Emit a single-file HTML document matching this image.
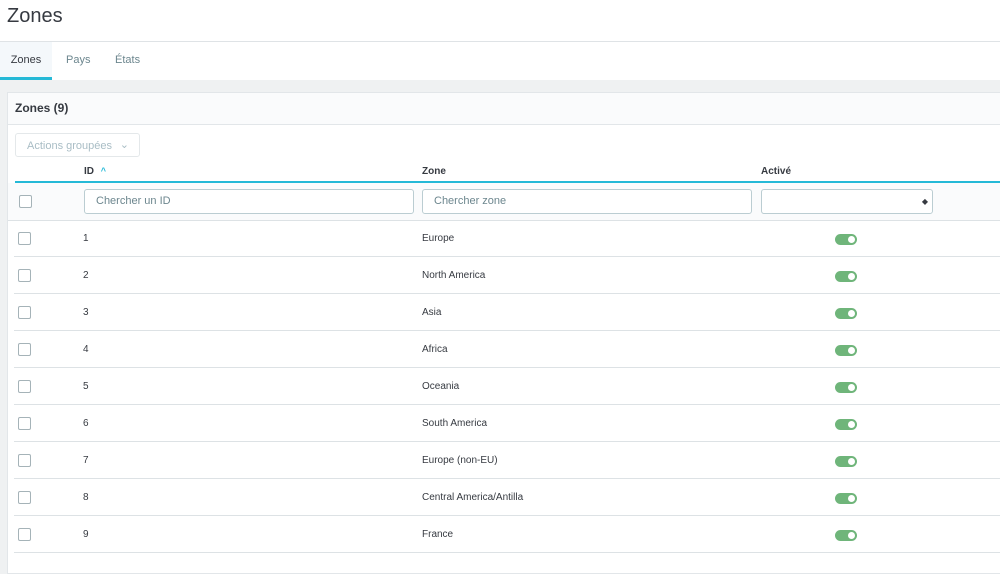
<!DOCTYPE html><html><head><style>
body{margin:0;width:1000px;height:569px;overflow:hidden;font-family:"Liberation Sans",sans-serif;background:#eff1f2;position:relative}
.hdr{position:absolute;left:0;top:0;width:1000px;height:41px;background:#fff;border-bottom:1px solid #dfe3e6}
.hdr h1{margin:0;position:absolute;left:7px;top:5px;font-weight:normal;font-size:20px;color:#363a41}
.tabs{position:absolute;left:0;top:42px;width:1000px;height:38px;background:#fff}
.tab{position:absolute;top:0;height:38px;line-height:36px;font-size:11px;color:#6c868e}
.tab.a{background:#f4f8fb;color:#363a41;border-bottom:3px solid #25b9d7;height:35px}
.panel{position:absolute;left:7px;top:92px;width:1000px;height:480px;background:#fff;border:1px solid #e2e6e9}
.ph{height:31px;background:#fafbfc;border-bottom:1px solid #e2e6e9;font-size:12px;font-weight:bold;color:#363a41;line-height:30px;padding-left:7px}
.btn{position:absolute;left:7px;top:40px;width:125px;height:24px;border:1px solid #e4e8ea;border-radius:3px;font-size:11px;color:#a9bdc5;line-height:24px;padding-left:11px;box-sizing:border-box}
.th{position:absolute;top:73px;font-size:10px;font-weight:bold;color:#363a41}
.blue{position:absolute;left:7px;top:88px;width:1000px;height:2px;background:#25b9d7}
.filt{position:absolute;left:7px;top:90px;width:1000px;height:37px;background:#fafbfc;border-bottom:1px solid #dde2e5}
.in{position:absolute;top:6px;height:25px;border:1px solid #bbcdd2;border-radius:3px;background:#fff;box-sizing:border-box;font-size:11px;color:#6c868e;line-height:23px;padding-left:11px}
.cb{position:absolute;left:4px;width:13px;height:13px;border:1px solid #a5b3b8;border-radius:2px;box-sizing:border-box;background:#fff}
.row{position:absolute;left:7px;width:1000px;height:36px;border-bottom:1px solid #dde2e5;font-size:10px;color:#363a41}
.row span{position:absolute;top:13px}
.tg{position:absolute;left:821px;top:14px;width:22px;height:11px;border-radius:6px;background:#6fb57a}
.tg:after{content:"";position:absolute;right:2px;top:2px;width:7px;height:7px;border-radius:50%;background:#fff}
</style></head><body>
<div class="hdr"><h1>Zones</h1></div>
<div class="tabs"><div class="tab a" style="left:0;width:52px;text-align:center">Zones</div><div class="tab" style="left:66px">Pays</div><div class="tab" style="left:115px">États</div></div>
<div class="panel">
<div class="ph">Zones (9)</div>
<div class="btn">Actions groupées <span style="position:absolute;right:10px;top:-1px;color:#a9bdc5">&#8964;</span></div>
<div class="th" style="left:76px">ID <span style="color:#25b9d7;font-size:9px;margin-left:4px">&#94;</span></div>
<div class="th" style="left:414px">Zone</div>
<div class="th" style="left:753px">Activé</div>
<div class="blue"></div>
<div class="filt" style="left:0;padding-left:7px">
<div class="cb" style="left:11px;top:12px"></div>
<div class="in" style="left:76px;width:330px">Chercher un ID</div>
<div class="in" style="left:414px;width:330px">Chercher zone</div>
<div class="in" style="left:753px;width:172px"><span style="position:absolute;right:4px;top:0;font-size:8px;color:#363a41">&#9670;</span></div>
</div>
</div>
<div id="rows"></div>
<script>
var z=["Europe","North America","Asia","Africa","Oceania","South America","Europe (non-EU)","Central America/Antilla","France"],h="";
for(var i=0;i<9;i++){var t=220+i*37;h+='<div class="row" style="left:14px;top:'+t+'px"><div class="cb" style="left:4px;top:12px"></div><span style="left:69px">'+(i+1)+'</span><span style="left:408px">'+z[i]+'</span><div class="tg"></div></div>';}
document.getElementById("rows").innerHTML=h;
</script>
</body></html>
